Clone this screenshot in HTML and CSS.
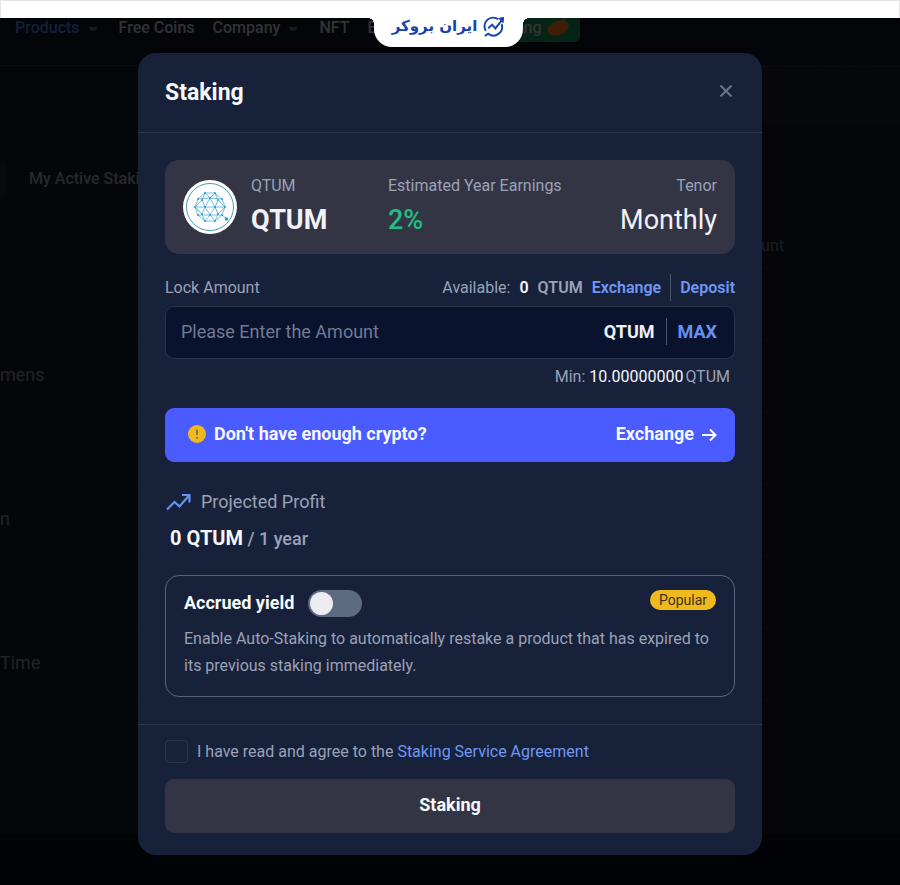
FILE: index.html
```html
<!DOCTYPE html>
<html lang="en">
  <head>
    <meta charset="UTF-8" />
    <meta name="viewport" content="width=device-width, initial-scale=1.0" />
    <title>Staking</title>
    <link rel="stylesheet" href="styles.css">
  </head>
  <body>
    <!-- Broker bar over the page -->
    <div class="broker-bar">
      <div class="broker-tab" lang="fa" dir="rtl">
        <svg class="broker-icon" viewBox="0 0 24 24" fill="none" stroke="#1443b0" stroke-width="2">
          <path d="M17 4.500A9 9 0 0 0 4 16.500M20.500 9.500A9 9 0 0 1 6.500 19.500L3 22" />
          <path d="M6.500 14l4-4 3.500 4L21 5" />
          <path d="M17.500 3.500L22.500 2.500 22 8z" fill="#1443b0" stroke-width="1" />
        </svg>
        <span>ایران بروکر</span>
      </div>
    </div>

    <!-- Page behind the dialog -->
    <div class="page">
      <nav class="navbar">
        <a href="#" class="current">Products <i class="caret"></i></a>
        <a href="#">Free Coins</a>
        <a href="#">Company <i class="caret"></i></a>
        <a href="#">NFT</a>
        <a href="#">B</a>
        <a href="#" class="nav-pill">ng
          <svg width="24" height="20" viewBox="0 0 24 20">
            <ellipse cx="12" cy="11" rx="11" ry="7" fill="#d4661c" transform="rotate(-20 12 11)" />
            <path d="M14 3l6-2-2 4z" fill="#b07c20" />
          </svg>
        </a>
      </nav>
      <div class="hero"></div>
      <div class="tabs">
        <span class="tab-active"></span>
        <a href="#">My Active Staking</a>
      </div>
      <table class="history">
        <thead>
          <tr><th></th><th class="amount">Amount</th></tr>
        </thead>
        <tbody>
          <tr><td></td><td></td></tr>
          <tr><td>mens</td><td></td></tr>
          <tr><td></td><td></td></tr>
          <tr><td>n</td><td></td></tr>
          <tr><td></td><td></td></tr>
          <tr><td>Time</td><td></td></tr>
        </tbody>
      </table>
    </div>

    <!-- Staking dialog -->
    <div class="overlay">
      <form class="modal" role="dialog" aria-labelledby="modal-title">
        <header class="modal-header">
          <h1 id="modal-title">Staking</h1>
          <button type="button" class="close" aria-label="Close">
            <svg width="14" height="14" viewBox="0 0 14 14" fill="none" stroke="currentColor" stroke-width="2">
              <path d="M1.500 1.500l11 11M12.500 1.500l-11 11" />
            </svg>
          </button>
        </header>

        <div class="modal-body">
          <section class="coin-card">
            <svg class="coin-logo" viewBox="0 0 54 54">
              <circle cx="27" cy="27" r="27" fill="#fff" />
              <circle cx="27" cy="27" r="23.500" fill="none" stroke="#4a9cb0" stroke-width="1" />
              <g fill="none" stroke="#3ba3d0" stroke-width="0.700">
                <path d="M12 27L15 19 22 13H32L39 19 42 27 39 35 32 41H22L15 35z" />
                <path d="M15 19L27 18 39 19M15 35L27 35 39 35M12 27H42" />
                <path d="M22 13L27 18 32 13M22 41L27 35 32 41" />
                <path d="M12 27L19 20 22 27 27 18 32 27 35 20 42 27 35 34 32 27 27 35 22 27 19 34z" />
                <path d="M22 13L19 20M32 13L35 20M19 34L22 41M35 34L32 41M39 35L44 39" />
              </g>
              <g fill="#2f9dd0">
                <circle cx="12" cy="27" r="1" /><circle cx="42" cy="27" r="1" />
                <circle cx="15" cy="19" r="1" /><circle cx="39" cy="19" r="1" />
                <circle cx="22" cy="13" r="1" /><circle cx="32" cy="13" r="1" />
                <circle cx="15" cy="35" r="1" /><circle cx="39" cy="35" r="1" />
                <circle cx="22" cy="41" r="1" /><circle cx="32" cy="41" r="1" />
                <circle cx="22" cy="27" r="1" /><circle cx="32" cy="27" r="1" />
                <circle cx="27" cy="18" r="1" /><circle cx="27" cy="35" r="1" />
                <circle cx="19" cy="20" r="1" /><circle cx="35" cy="20" r="1" />
                <circle cx="19" cy="34" r="1" /><circle cx="35" cy="34" r="1" />
                <circle cx="43.500" cy="39" r="1.800" />
              </g>
            </svg>
            <div class="stat">
              <span class="stat-label">QTUM</span>
              <strong class="stat-value">QTUM</strong>
            </div>
            <div class="stat">
              <span class="stat-label">Estimated Year Earnings</span>
              <span class="stat-value green">2%</span>
            </div>
            <div class="stat right">
              <span class="stat-label">Tenor</span>
              <span class="stat-value">Monthly</span>
            </div>
          </section>

          <div class="amount-head">
            <label for="amount">Lock Amount</label>
            <div class="available">
              <span>Available:</span>
              <b class="white">0</b>
              <b>QTUM</b>
              <a href="#">Exchange</a>
              <i class="divider"></i>
              <a href="#">Deposit</a>
            </div>
          </div>
          <div class="amount-box">
            <input type="text" id="amount" placeholder="Please Enter the Amount" />
            <b>QTUM</b>
            <i class="divider"></i>
            <button type="button" class="max">MAX</button>
          </div>
          <p class="min">Min: <span class="white">10.00000000</span><span class="unit">QTUM</span></p>

          <a href="#" class="banner">
            <svg width="18" height="18" viewBox="0 0 18 18">
              <circle cx="9" cy="9" r="9" fill="#f0b91e" />
              <path d="M9 4.500v5.500M9 12v1.700" stroke="#7a6650" stroke-width="1.600" />
            </svg>
            <span>Don't have enough crypto?</span>
            <span class="banner-link">Exchange</span>
            <svg width="15" height="14" viewBox="0 0 15 14" fill="none" stroke="#fff" stroke-width="2">
              <path d="M0 8h13M8 2.500L13.500 8 8 13.500" />
            </svg>
          </a>

          <div class="profit-title">
            <svg width="26" height="18" viewBox="0 0 26 18" fill="none" stroke="#6592f0" stroke-width="2.200">
              <path d="M2 16.500L9.500 9l5 4.500L24 2.500" />
              <path d="M17 2H24.500V9.500" />
            </svg>
            <span>Projected Profit</span>
          </div>
          <p class="profit"><b>0 QTUM</b> / 1 year</p>

          <section class="yield-card">
            <div class="yield-head">
              <label for="auto">Accrued yield</label>
              <input type="checkbox" id="auto" class="switch" />
              <span class="badge">Popular</span>
            </div>
            <p>Enable Auto-Staking to automatically restake a product that has expired to its previous staking immediately.</p>
          </section>
        </div>

        <footer class="modal-footer">
          <div class="agree">
            <input type="checkbox" id="agree" />
            <label for="agree">I have read and agree to the <a href="#">Staking Service Agreement</a></label>
          </div>
          <button type="submit" class="submit">Staking</button>
        </footer>
      </form>
    </div>
  </body>
</html>
```
FILE: styles.css
```css
* {
  box-sizing: border-box;
}
body {
  margin: 0;
  min-height: 100vh;
  background-color: #080a14;
  color: #9aa2b8;
  font-family: Roboto, "Liberation Sans", sans-serif;
  font-size: 16px;
  line-height: 27px;
}
h1,
p {
  margin: 0;
}
a {
  color: #6f97f5;
  text-decoration: none;
}
button,
input {
  font-family: inherit;
}
button {
  border: none;
  padding: 0;
  background: none;
  cursor: pointer;
}
svg {
  flex: none;
}
/* Broker bar */
.broker-bar {
  position: fixed;
  top: 0;
  left: 0;
  right: 0;
  z-index: 3;
  display: flex;
  justify-content: center;
  height: 18px;
  padding-right: 3px;
  background-color: #ffffff;
  border: 1px solid #e4e4e4;
  border-bottom: none;
}
.broker-tab {
  position: relative;
  display: flex;
  align-items: center;
  justify-content: center;
  gap: 5px;
  width: 149px;
  height: 46px;
  padding-top: 4px;
  background-color: #ffffff;
  border-radius: 0 0 18px 18px;
  color: #1443b0;
  font-family: "DejaVu Sans", sans-serif;
  font-size: 15px;
  font-weight: bold;
}
.broker-tab::before,
.broker-tab::after {
  content: "";
  position: absolute;
  top: 17px;
  width: 6px;
  height: 6px;
}
.broker-tab::before {
  right: 100%;
  background: radial-gradient(circle at 0 100%, transparent 6px, #ffffff 6px);
}
.broker-tab::after {
  left: 100%;
  background: radial-gradient(circle at 100% 100%, transparent 6px, #ffffff 6px);
}
.broker-icon {
  width: 23px;
  height: 23px;
}
/* Page behind the dialog */
.page {
  height: 834px;
  overflow: hidden;
  background-color: #121722;
}
.navbar {
  display: flex;
  align-items: center;
  gap: 18px;
  padding: 12px 15px 23px;
  border-bottom: 1px solid #1c232c;
  background-color: #10131f;
  font-weight: 500;
}
.navbar a {
  display: flex;
  align-items: center;
  gap: 9px;
  height: 30px;
  color: #a9a9ad;
}
.navbar .current {
  color: #4a62c8;
}
.caret {
  width: 8px;
  height: 4px;
  margin: 3px 4px 0 0;
  border-radius: 0 0 4px 4px;
  background-color: #54565c;
}
.navbar .nav-pill {
  gap: 4px;
  margin-left: 112px;
  padding: 0 10px 0 16px;
  border-radius: 6px;
  background-color: #127a48;
}
.hero {
  height: 58px;
  background: linear-gradient(90deg, #10161f, #171b25);
}
.tabs {
  display: flex;
  align-items: center;
  gap: 22px;
  padding: 36px 0 27px;
  font-weight: 500;
}
.tabs a {
  color: #83858c;
}
.tab-active {
  width: 7px;
  height: 36px;
  border-radius: 0 8px 8px 0;
  background-color: #1b2029;
}
.history {
  width: 100%;
  border-collapse: collapse;
}
.history th {
  height: 44px;
  padding: 2px 0 0;
  border-bottom: 1px solid #1c222e;
  font-weight: normal;
  color: #60646c;
}
.history .amount {
  padding-right: 116px;
  text-align: right;
}
.history td {
  height: 72px;
  padding: 0 0 2px;
  border-bottom: 1px solid #1c222e;
  color: #73757c;
  font-size: 18px;
}
/* Dialog */
.overlay {
  position: absolute;
  top: 0;
  left: 0;
  right: 0;
  min-height: 100%;
  z-index: 2;
  display: flex;
  justify-content: center;
  align-items: flex-start;
  padding: 53px 16px 30px;
  background-color: rgba(0, 0, 0, 0.7);
}
.modal {
  width: 100%;
  max-width: 624px;
  border-radius: 18px;
  background-color: #18213a;
}
.modal-header {
  display: flex;
  align-items: flex-start;
  justify-content: space-between;
  padding: 24px 28px 23px 27px;
  border-bottom: 1px solid #2d374d;
}
.modal-header h1 {
  font-size: 23px;
  line-height: 32px;
  color: #f7f8fa;
}
.close {
  display: flex;
  margin-top: 6px;
  padding: 1px;
  color: #69738a;
}
.modal-body {
  padding: 27px;
}
.white {
  color: #f7f8fa;
}
.coin-card {
  display: grid;
  grid-template-columns: 54px 123px 1fr auto;
  gap: 14px;
  align-items: center;
  padding: 13px 18px;
  border-radius: 14px;
  background-color: #333545;
}
.coin-logo {
  width: 54px;
  height: 54px;
}
.stat {
  display: flex;
  flex-direction: column;
}
.stat-label {
  line-height: 26px;
}
.stat-value {
  font-size: 27px;
  line-height: 42px;
  color: #f0f2f6;
}
.green {
  color: #21bf82;
  font-weight: 500;
}
.right {
  text-align: right;
}
.amount-head {
  display: flex;
  justify-content: space-between;
  margin: 20px 0 5px;
}
.available {
  display: flex;
  gap: 9px;
}
.available b,
.available a {
  font-weight: 600;
}
.divider {
  width: 1px;
  height: 27px;
  background-color: #4b556b;
}
.amount-box {
  display: flex;
  align-items: center;
  gap: 11px;
  height: 53px;
  padding: 0 17px 2px 15px;
  border: 1px solid #2a3348;
  border-radius: 9px;
  background-color: #0a132e;
  color: #eef0f5;
  font-size: 18px;
}
.amount-box input {
  flex: 1;
  min-width: 0;
  padding: 0;
  border: none;
  outline: none;
  background: none;
  color: #eef0f5;
  font-size: 18px;
}
.amount-box input::placeholder {
  color: #717a93;
}
.max {
  color: #6592f0;
  font-size: 18px;
  font-weight: bold;
}
.min {
  margin: 4px 5px 18px;
  text-align: right;
}
.unit {
  margin-left: 2px;
}
.banner {
  display: flex;
  align-items: center;
  gap: 8px;
  height: 54px;
  padding: 0 18px 3px 23px;
  border-radius: 9px;
  background-color: #4a5cff;
  color: #f5f6ff;
  font-size: 18px;
  font-weight: bold;
}
.banner-link {
  margin-left: auto;
}
.profit-title {
  display: flex;
  align-items: center;
  gap: 10px;
  margin-top: 26px;
  font-size: 18px;
}
.profit {
  margin: 10px 5px 23px;
  font-size: 18px;
  font-weight: 500;
}
.profit b {
  color: #f7f8fa;
  font-size: 20px;
}
.yield-card {
  padding: 14px 18px 17px;
  border: 1px solid #5a6379;
  border-radius: 14px;
}
.yield-head {
  display: flex;
  align-items: center;
  gap: 14px;
  margin-bottom: 8px;
}
.yield-head label {
  padding-bottom: 2px;
  color: #f7f8fa;
  font-size: 18px;
  font-weight: bold;
  line-height: 25px;
}
.switch {
  appearance: none;
  width: 54px;
  height: 27px;
  margin: 0;
  padding: 2px;
  border-radius: 14px;
  background-color: #5c6b82;
}
.switch::before {
  content: "";
  display: block;
  width: 23px;
  height: 23px;
  border-radius: 50%;
  background-color: #ececf0;
}
.switch:checked::before {
  margin-left: auto;
}
.badge {
  align-self: flex-start;
  margin-left: auto;
  padding: 0 9px;
  border-radius: 10px;
  background-color: #f0b91e;
  color: #3a3420;
  font-size: 14px;
  line-height: 20px;
}
.modal-footer {
  padding: 15px 27px 22px;
  border-top: 1px solid #2d374d;
}
.agree {
  display: flex;
  align-items: center;
  gap: 9px;
  margin-bottom: 16px;
  line-height: 23px;
}
.agree input {
  appearance: none;
  width: 23px;
  height: 23px;
  margin: 0;
  border: 1px solid #2c3549;
  border-radius: 4px;
}
.agree input:checked {
  background-color: #4a5cff;
}
.submit {
  width: 100%;
  height: 54px;
  padding-bottom: 3px;
  border-radius: 9px;
  background-color: #333545;
  color: #f7f8fa;
  font-size: 18px;
  font-weight: bold;
}
```
